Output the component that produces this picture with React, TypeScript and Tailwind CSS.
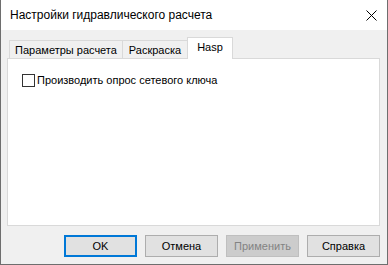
import React from "react";

// Windows-style dialog: "Настройки гидравлического расчета", Hasp tab selected.

const font = "font-['Segoe_UI','Liberation_Sans',Arial,sans-serif]";

function Tab({ label, active, className }: { label: string; active?: boolean; className: string }) {
  if (active) {
    return (
      <div
        className={`relative z-10 -mb-px flex h-[22px] items-start justify-center border-x border-t border-[#d9d9d9] bg-white pt-[3px] text-[11px] leading-[13px] ${className}`}
      >
        {label}
      </div>
    );
  }
  return (
    <div
      className={`flex h-[18px] items-center justify-center border-l border-t border-[#d9d9d9] bg-[#f0f0f0] pt-[1px] text-[11px] leading-[13px] ${className}`}
    >
      {label}
    </div>
  );
}

function Button({ label, variant }: { label: string; variant?: "default" | "disabled" }) {
  const base = "flex h-[22px] w-[73px] items-center justify-center text-[11px]";
  if (variant === "default") {
    return <div className={`${base} border-2 border-[#0078d7] bg-[#e1e1e1] text-black`}>{label}</div>;
  }
  if (variant === "disabled") {
    return <div className={`${base} border border-[#bfbfbf] bg-[#cccccc] text-[#838383]`}>{label}</div>;
  }
  return <div className={`${base} border border-[#adadad] bg-[#e1e1e1] text-black`}>{label}</div>;
}

export default function App() {
  return (
    <div
      className={`flex h-[265px] w-[388px] flex-col border-x border-b border-[#6e6e6e] bg-[#f0f0f0] text-black ${font}`}
    >
      {/* title bar */}
      <div className="flex h-[30px] items-center justify-between bg-white pl-[9px] pr-[10px]">
        <span className="text-[12px]">Настройки гидравлического расчета</span>
        <svg width="11" height="11" viewBox="0 0 11 11" className="mt-[1px]">
          <path d="M0.5 0.5 L10.5 10.5 M10.5 0.5 L0.5 10.5" stroke="#000" strokeWidth="1" />
        </svg>
      </div>

      <div className="flex flex-1 flex-col pl-[6px] pr-[7px] pt-[7px]">
        {/* tabs */}
        <div className="flex items-end pl-[2px]">
          <Tab label="Параметры расчета" className="w-[113px]" />
          <Tab label="Раскраска" className="w-[66px] border-r" />
          <Tab label="Hasp" active className="-ml-px w-[46px]" />
        </div>

        {/* tab panel */}
        <div className="h-[168px] border border-[#d9d9d9] bg-white pl-[14px] pt-[13px]">
          <label className="flex items-center gap-[2px] text-[11px]">
            <span className="h-[13px] w-[13px] border border-[#333333] bg-white" />
            Производить опрос сетевого ключа
          </label>
        </div>

        {/* buttons */}
        <div className="mt-[9px] flex justify-end gap-[8px]">
          <Button label="OK" variant="default" />
          <Button label="Отмена" />
          <Button label="Применить" variant="disabled" />
          <Button label="Справка" />
        </div>
      </div>
    </div>
  );
}
